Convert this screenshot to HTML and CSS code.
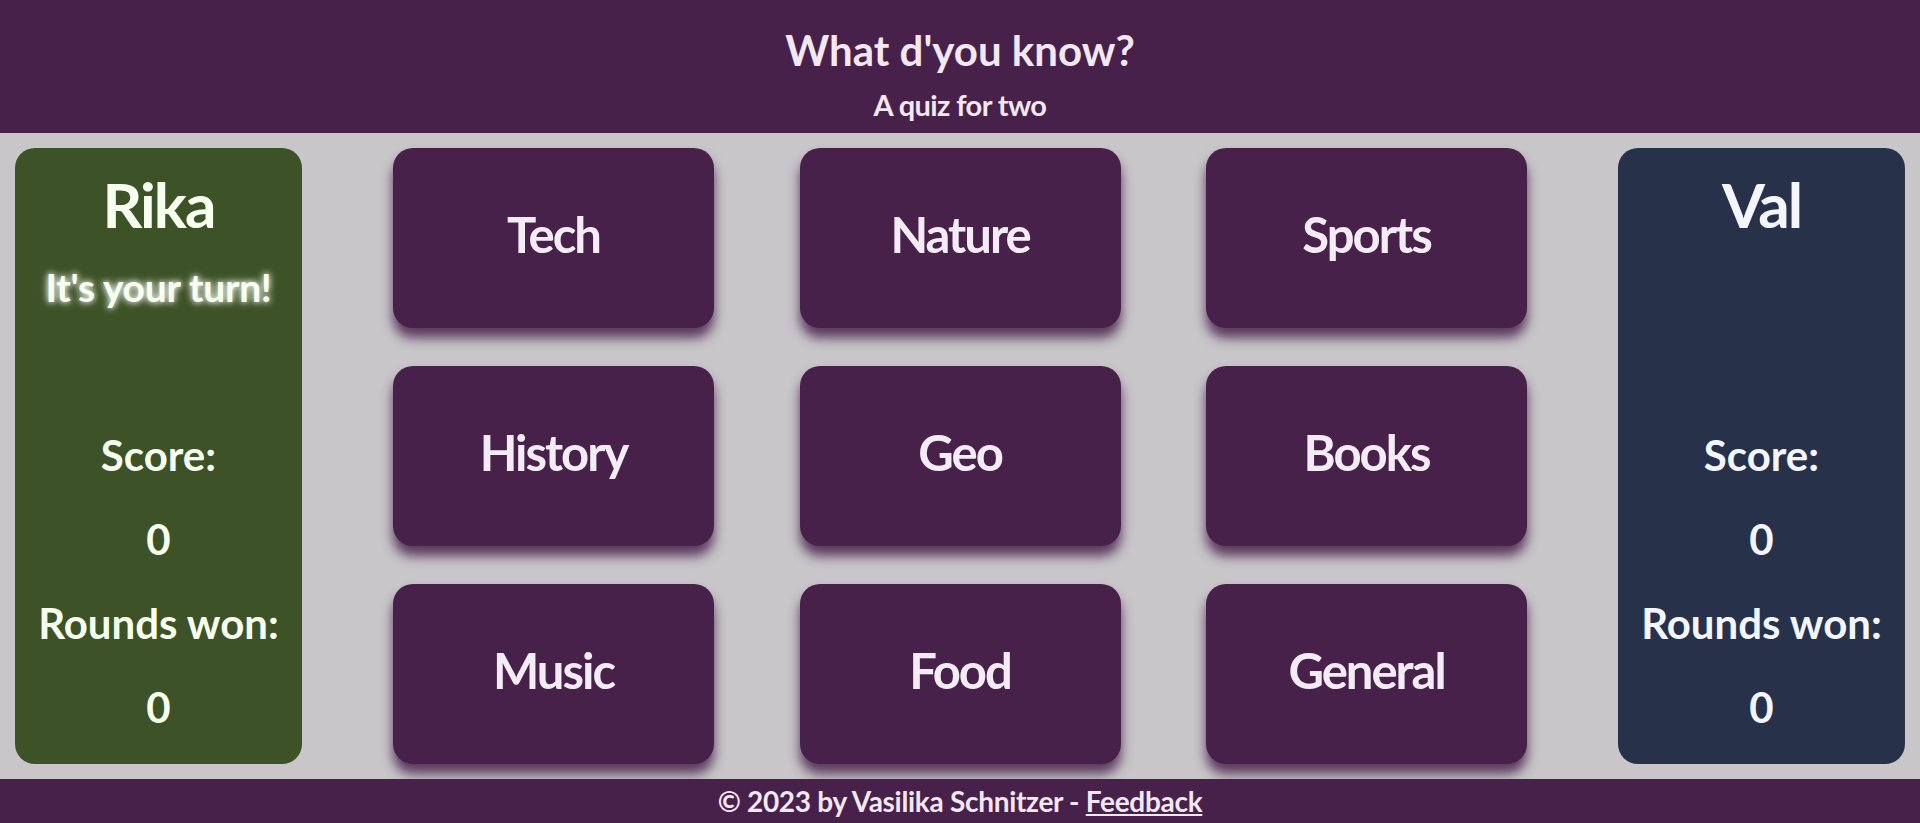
FILE: index.html
```html
<!DOCTYPE html>
<html lang="en">
<head>
<meta charset="utf-8">
<title>What d'you know?</title>
<link rel="stylesheet" href="styles.css">
</head>
<body>
<header class="top">
  <h1 class="title">What d'you know?</h1>
  <p class="subtitle">A quiz for two</p>
</header>
<main class="board">
  <section class="player player-one">
    <h2 class="player-name">Rika</h2>
    <p class="turn">It's your turn!</p>
    <div class="stats">
      <p class="stat">Score:</p>
      <p class="stat">0</p>
      <p class="stat">Rounds won:</p>
      <p class="stat">0</p>
    </div>
  </section>
  <div class="categories">
    <button class="cat">Tech</button>
    <button class="cat">Nature</button>
    <button class="cat">Sports</button>
    <button class="cat">History</button>
    <button class="cat">Geo</button>
    <button class="cat">Books</button>
    <button class="cat">Music</button>
    <button class="cat">Food</button>
    <button class="cat">General</button>
  </div>
  <section class="player player-two">
    <h2 class="player-name">Val</h2>
    <p class="turn"></p>
    <div class="stats">
      <p class="stat">Score:</p>
      <p class="stat">0</p>
      <p class="stat">Rounds won:</p>
      <p class="stat">0</p>
    </div>
  </section>
</main>
<footer class="bottom">
  <p class="credit">© 2023 by Vasilika Schnitzer - <a class="feedback" href="#">Feedback</a></p>
</footer>
</body>
</html>
```
FILE: styles.css
```css
* {
  box-sizing: border-box;
}

html, body {
  margin: 0;
  padding: 0;
}

body {
  background: #c8c6c9;
  font-family: "Lato", "Open Sans", sans-serif;
  font-weight: 700;
  width: 1920px;
  height: 823px;
  display: flex;
  flex-direction: column;
}

.top {
  background: #48214b;
  color: #f2e8f2;
  height: 133px;
  text-align: center;
  padding-top: 25px;
}

.title {
  margin: 0;
  font-size: 42px;
  line-height: 1.2;
  font-weight: 700;
  letter-spacing: 0;
}

.subtitle {
  margin: 13px 0 0;
  font-size: 29px;
  line-height: 1.2;
  letter-spacing: -0.6px;
}

.board {
  flex: 1;
  display: flex;
  justify-content: space-between;
  align-items: stretch;
  padding: 15px;
}

.player {
  width: 287px;
  border-radius: 20px;
  display: flex;
  flex-direction: column;
  align-items: center;
  text-align: center;
  padding-top: 19px;
  padding-bottom: 15px;
}

.player-one {
  background: #3d5226;
  color: #f6fff0;
}

.player-two {
  background: #27324a;
  color: #f3f6ff;
}

.player-name {
  margin: 0;
  font-size: 62px;
  line-height: 1.2;
  font-weight: 700;
  letter-spacing: -2px;
}

.turn {
  margin: 23px 0 0;
  font-size: 39px;
  line-height: 1.2;
  height: 47px;
  letter-spacing: -0.3px;
  text-shadow: 0 0 6px #ffffff, 0 0 10px rgba(255, 255, 255, 0.6);
}

.stats {
  margin-top: auto;
}

.stat {
  margin: 0;
  font-size: 42px;
  line-height: 84px;
  letter-spacing: 0;
}

.categories {
  display: grid;
  grid-template-columns: repeat(3, 321px);
  grid-template-rows: repeat(3, 180px);
  column-gap: 85.5px;
  row-gap: 38px;
}

.cat {
  border: none;
  margin: 0;
  background: #48214b;
  color: #f3ecf5;
  border-radius: 20px;
  font-family: "Lato", "Open Sans", sans-serif;
  font-weight: 700;
  font-size: 49px;
  line-height: 1.2;
  letter-spacing: -2px;
  padding: 0 0 8px;
  box-shadow: 0 10px 12px rgba(72, 33, 75, 0.85);
  cursor: pointer;
}

.bottom {
  background: #48214b;
  color: #f2e8f2;
  height: 44px;
  text-align: center;
}

.credit {
  margin: 0;
  font-size: 28px;
  line-height: 44px;
  letter-spacing: -0.3px;
}

.feedback {
  color: #f2e8f2;
  text-decoration: underline;
}
```
